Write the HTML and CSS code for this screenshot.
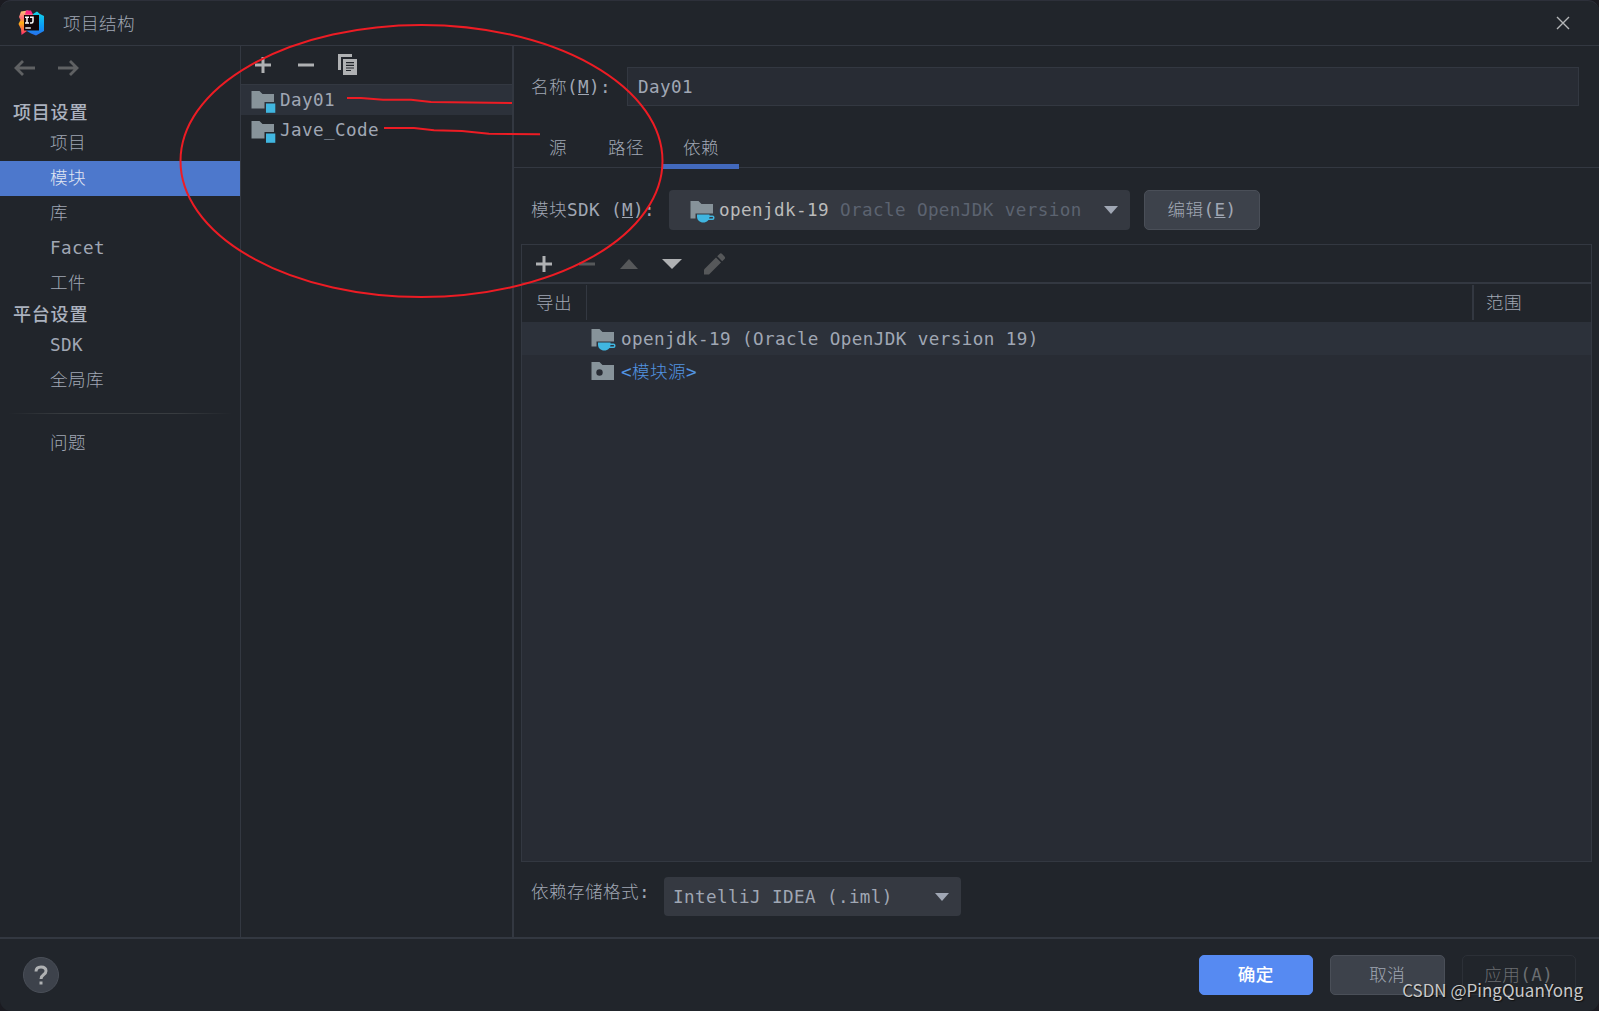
FILE: index.html
```html
<!DOCTYPE html>
<html lang="zh-CN">
<head>
    <meta charset="UTF-8">
    <meta name="viewport" content="width=device-width, initial-scale=1.0">
    <title>项目结构</title>
    <link rel="stylesheet" href="styles.css">
</head>
<body>
    <!-- shared icons -->
    <svg class="defs" width="0" height="0">
        <symbol id="plus" viewBox="0 0 18 18"><path d="M7.500 1h3v6.500H17v3h-6.500V17h-3v-6.500H1v-3h6.500z"/></symbol>
        <symbol id="minus" viewBox="0 0 18 18"><path d="M1 7.500h16v3H1z"/></symbol>
        <symbol id="folder" viewBox="0 0 26 24"><path fill="#87939a" d="M1.500 1h8l3 3H24v15H1.500z"/></symbol>
        <symbol id="module" viewBox="0 0 26 24">
            <path fill="#87939a" d="M1.500 1h8l3 3H24v8h-9.500v6.500h-13z"/>
            <path fill="#40b6e0" d="M16 13.500h9.300v9.300H16z"/>
        </symbol>
        <symbol id="sdk" viewBox="0 0 26 24">
            <path fill="#87939a" d="M1.500 1h8l3 3H24v9.500H6.500v5h-5z"/>
            <path fill="#40b6e0" d="M8 14.500h12.500v2c0 3.500-2.500 6-6.200 6S8 20 8 16.500z"/>
            <path fill="none" stroke="#40b6e0" stroke-width="1.500" d="M20 16.200h3.500q1.300 0 1.300 1.500t-1.300 1.600H19"/>
        </symbol>
        <symbol id="caret" viewBox="0 0 14 8"><path d="M0 0h14L7 8z"/></symbol>
    </svg>

    <div class="window">
        <div class="titlebar">
            <svg class="logo" width="26" height="26" viewBox="0 0 26 26">
                <defs>
                    <linearGradient id="warm" x1="0" y1="0" x2="0" y2="1">
                        <stop offset="0" stop-color="#fccf73"/>
                        <stop offset=".3" stop-color="#ff6c7c"/>
                        <stop offset=".5" stop-color="#fdb012"/>
                        <stop offset="1" stop-color="#fe2875"/>
                    </linearGradient>
                    <linearGradient id="cool" x1="0" y1="0" x2="0" y2="1">
                        <stop offset="0" stop-color="#14d3e8"/>
                        <stop offset=".6" stop-color="#0a9cf5"/>
                        <stop offset="1" stop-color="#2a70ec"/>
                    </linearGradient>
                </defs>
                <path fill="url(#warm)" d="M3 1.500L10 .5l5 4L9 21l-5.500 4-.5-6-2.500-5 2-4L1 7z"/>
                <path fill="#fe2885" d="M8 .5h5l2 4H7z"/>
                <path fill="url(#cool)" d="M15 4l4-2.500 3 2.500 4 2v15l-8 4.500-5-2-5-3 7-9z"/>
                <path fill="#120509" d="M6 5h15v15.500H6z"/>
                <path fill="#fff" d="M7.300 17.300h5.500v1.400H7.300z"/>
                <path fill="none" stroke="#fff" stroke-width="1.500" d="M7 7.300h4M9 7.300v6M7 13h4M12 7.300h3v4q0 1.800-1.600 1.800H12"/>
            </svg>
            <span class="title">项目结构</span>
            <svg class="close" width="14" height="14" viewBox="0 0 14 14"><path d="M1 1l12 12M13 1L1 13"/></svg>
        </div>

        <div class="main">
            <div class="sidebar">
                <div class="history">
                    <svg width="22" height="16" viewBox="0 0 22 16"><path d="M21 8H3M9 1L2 8l7 7"/></svg>
                    <svg width="22" height="16" viewBox="0 0 22 16"><path d="M1 8h18M13 1l7 7-7 7"/></svg>
                </div>
                <h2>项目设置</h2>
                <ul>
                    <li>项目</li>
                    <li class="selected">模块</li>
                    <li>库</li>
                    <li>Facet</li>
                    <li>工件</li>
                </ul>
                <h2 class="platform">平台设置</h2>
                <ul>
                    <li>SDK</li>
                    <li>全局库</li>
                </ul>
                <hr>
                <ul>
                    <li>问题</li>
                </ul>
            </div>

            <div class="modules">
                <div class="toolbar">
                    <svg class="icon" width="18" height="18"><use href="#plus"/></svg>
                    <svg class="icon" width="18" height="18"><use href="#minus"/></svg>
                    <svg class="icon" width="20" height="22" viewBox="0 0 20 22">
                        <path d="M0 0h14v3H3v13H0z"/>
                        <path fill-rule="evenodd" d="M5 5h14v16H5zM8 8v1.200h8V8zM8 10.700v1.200h8v-1.200zM8 13.400v1.200h8v-1.200zM8 16v1h5v-1z"/>
                    </svg>
                </div>
                <div class="module selected">
                    <svg width="26" height="24"><use href="#module"/></svg><span>Day01</span>
                </div>
                <div class="module">
                    <svg width="26" height="24"><use href="#module"/></svg><span>Jave_Code</span>
                </div>
            </div>

            <div class="details">
                <div class="name-row">
                    <label>名称(<u>M</u>):</label>
                    <div class="input">Day01</div>
                </div>

                <div class="tabs">
                    <div class="tab">源</div>
                    <div class="tab">路径</div>
                    <div class="tab active">依赖</div>
                </div>

                <div class="sdk-row">
                    <label>模块SDK (<u>M</u>):</label>
                    <div class="combo sdk-combo">
                        <svg width="26" height="24"><use href="#sdk"/></svg>
                        <span class="sdk-name">openjdk-19</span>
                        <span class="hint">Oracle OpenJDK version</span>
                        <svg class="caret" width="14" height="8"><use href="#caret"/></svg>
                    </div>
                    <div class="btn edit">编辑(<u>E</u>)</div>
                </div>

                <div class="table">
                    <div class="toolbar">
                        <svg class="icon" width="18" height="18"><use href="#plus"/></svg>
                        <svg class="icon off" width="18" height="18"><use href="#minus"/></svg>
                        <svg class="icon off" width="18" height="10" viewBox="0 0 18 10"><path d="M9 0l9 10H0z"/></svg>
                        <svg class="icon" width="20" height="10" viewBox="0 0 20 10"><path d="M0 0h20l-10 10z"/></svg>
                        <svg class="icon off" width="22" height="22" viewBox="0 0 22 22">
                            <path d="M0 16.500L12 4.500l5 5-12 12H0z"/>
                            <path d="M13.200 3.300l2.300-2.300q1.300-1.300 2.600 0l2.400 2.400q1.300 1.300 0 2.600l-2.300 2.300z"/>
                        </svg>
                    </div>
                    <div class="thead">
                        <div class="export">导出</div>
                        <div class="entry"></div>
                        <div class="scope">范围</div>
                    </div>
                    <div class="row selected">
                        <svg width="26" height="24"><use href="#sdk"/></svg><span>openjdk-19 (Oracle OpenJDK version 19)</span>
                    </div>
                    <div class="row">
                        <svg width="26" height="24"><use href="#folder"/><circle cx="9.500" cy="11.500" r="3.200" fill="#282c34"/></svg><span class="link">&lt;模块源&gt;</span>
                    </div>
                </div>

                <div class="format-row">
                    <label>依赖存储格式:</label>
                    <div class="combo format-combo">
                        <span>IntelliJ IDEA (.iml)</span>
                        <svg class="caret" width="14" height="8"><use href="#caret"/></svg>
                    </div>
                </div>
            </div>
        </div>

        <div class="footer">
            <div class="help"><svg width="14" height="20" viewBox="0 0 14 20"><path fill="none" stroke="#afb1b3" stroke-width="3" d="M2 6.500Q2 2 7 2t5 4q0 2-2.500 3.800T7 14"/><path fill="#afb1b3" d="M5.500 16.500h3v3h-3z"/></svg></div>
            <div class="btn primary">确定</div>
            <div class="btn">取消</div>
            <div class="btn disabled">应用(A)</div>
        </div>

        <!-- red pen marks -->
        <svg class="marks" width="700" height="320" viewBox="0 0 700 320">
            <ellipse cx="421.500" cy="161" rx="241" ry="136"/>
            <path d="M347 98h14l22 1.800h28l20 2.200 81 1"/>
            <path d="M384 128h30l20 2.200 28 .8 27 2.800 51 .4"/>
        </svg>
        <div class="watermark">CSDN @PingQuanYong</div>
    </div>
</body>
</html>
```
FILE: styles.css
```css
* {
    box-sizing: border-box;
}

body {
    margin: 0;
    background: #1b1b21;
    color: #a0a7b4;
    font-family: 'DejaVu Sans Mono', 'Noto Sans CJK SC', monospace;
    font-size: 17.6px;
    font-weight: 300;
    letter-spacing: 0.4px;
    line-height: 24px;
    white-space: nowrap;
    overflow: hidden;
}

.defs {
    position: absolute;
}

svg {
    display: block;
    flex: none;
}

.window {
    position: relative;
    display: flex;
    flex-direction: column;
    height: 1011px;
    background: #21252b;
    border-top: 1px solid #2d303a;
    border-radius: 11px;
}

/* Title bar */
.titlebar {
    display: flex;
    align-items: center;
    height: 45px;
    padding: 0 29px 0 18px;
    border-bottom: 1px solid #333841;
}

.title {
    margin-left: 19px;
    padding-top: 1px;
}

.close {
    margin-left: auto;
    fill: none;
    stroke: #b4b6b8;
    stroke-width: 1.4;
}

.main {
    display: flex;
    height: 891px;
}

/* Left navigation */
.sidebar {
    width: 241px;
    border-right: 1px solid #333841;
}

.history {
    display: flex;
    gap: 21px;
    height: 52px;
    padding: 14px 0 0 14px;
}

.history svg {
    fill: none;
    stroke: #5f6163;
    stroke-width: 2.8;
}

.sidebar h2 {
    height: 28px;
    margin: 0;
    padding: 3px 0 0 13px;
    color: #abb2bf;
    font-size: 18px;
    font-weight: 500;
    letter-spacing: 0.8px;
}

.sidebar h2.platform {
    height: 27px;
    padding-top: 2px;
}

.sidebar ul {
    margin: 0;
    padding: 0;
    list-style: none;
}

.sidebar li {
    height: 35px;
    padding: 5px 0 0 50px;
}

.sidebar li.selected {
    background: #4d78cc;
    color: #e0e6f2;
}

.sidebar hr {
    height: 1px;
    margin: 15px 8px 12px 8px;
    border: 0;
    background: linear-gradient(to right, transparent, #383c40 25%, #383c40 75%, transparent);
}

/* Module list */
.modules {
    width: 271px;
}

.toolbar {
    display: flex;
    align-items: center;
}

.icon {
    fill: #afb1b3;
}

.icon.off {
    fill: #56585a;
}

.modules .toolbar {
    gap: 25px;
    height: 38px;
    padding-left: 13px;
}

.modules .toolbar .icon:last-child {
    margin-left: -2px;
}

.module {
    display: flex;
    align-items: center;
    height: 30px;
    padding-left: 9px;
}

.module span {
    margin-left: 4px;
}

.module.selected {
    height: 31px;
    background: #2c313a;
    border-top: 1px solid #333841;
}

.module svg {
    margin-top: 3px;
}

/* Module details */
.details {
    flex: 1;
    border-left: 2px solid #333841;
}

.name-row {
    display: flex;
    align-items: center;
    height: 39px;
    margin: 21px 20px 0 17px;
}

.name-row label {
    width: 96px;
}

.input {
    flex: 1;
    height: 39px;
    padding: 7px 10px;
    background: #282c34;
    border: 1px solid #333841;
}

.tabs {
    display: flex;
    height: 62px;
    padding: 23px 0 0 15px;
    border-bottom: 1px solid #333841;
    margin-bottom: 22px;
}

.tab {
    height: 39px;
    padding: 7px 19px 0 20px;
}

.tab:first-child {
    padding-right: 21px;
}

.tab.active {
    position: relative;
    width: 76px;
}

.tab.active::after {
    content: "";
    position: absolute;
    left: 0;
    right: 0;
    bottom: -1px;
    height: 5px;
    background: #4269bd;
}

.sdk-row {
    display: flex;
    align-items: center;
    padding-left: 17px;
}

.sdk-row label {
    width: 138px;
}

.combo {
    display: flex;
    align-items: center;
    height: 39px;
    background: #353941;
    border-radius: 4px;
}

.sdk-combo {
    width: 461px;
    height: 40px;
    padding: 0 12px 0 20px;
}

.sdk-combo svg:first-child {
    margin-top: 4px;
}

.sdk-name {
    margin-left: 4px;
    color: #bbb;
}

.hint {
    margin-left: 11px;
    color: #5c6370;
}

.caret {
    margin-left: auto;
    fill: #a0a7b4;
}

.btn {
    display: flex;
    justify-content: center;
    align-items: center;
    width: 115px;
    height: 40px;
    background: #3d424b;
    border: 1px solid #4a4f58;
    border-radius: 5px;
}

.edit {
    width: 116px;
    margin-left: 14px;
}

/* Dependencies table */
.table {
    width: 1071px;
    height: 618px;
    margin: 14px 0 0 7px;
    background: #282c34;
    border: 1px solid #333841;
}

.table .toolbar {
    gap: 25px;
    height: 39px;
    padding-left: 13px;
    background: #21252b;
    border-bottom: 2px solid #333841;
}

.table .toolbar .icon:nth-child(3) {
    margin-left: -1px;
}

.table .toolbar .icon:nth-child(4) {
    margin: 0 -3px 0 -1px;
}

.thead {
    display: flex;
    height: 38px;
    padding: 1px 0 2px;
    background: #21252b;
}

.thead div {
    padding-top: 6px;
}

.thead .export {
    width: 65px;
    padding-left: 14px;
    border-right: 1px solid #333841;
}

.thead .entry {
    flex: 1;
}

.thead .scope {
    width: 119px;
    padding-left: 12px;
    border-left: 2px solid #333841;
}

.row {
    display: flex;
    align-items: center;
    height: 33px;
    padding-left: 68px;
}

.row.selected {
    background: #2c313a;
}

.row svg {
    margin-top: 3px;
}

.row span {
    margin-left: 5px;
}

.link {
    color: #5294e2;
}

.format-row {
    display: flex;
    padding: 15px 0 0 17px;
}

.format-row label {
    width: 133px;
    padding-top: 3px;
}

.format-combo {
    width: 297px;
    padding: 0 12px 0 9px;
}

/* Bottom bar */
.footer {
    display: flex;
    align-items: flex-start;
    gap: 17px;
    height: 74px;
    padding: 16px 23px 0 23px;
    border-top: 2px solid #333841;
}

.footer .btn {
    width: 114.500px;
}

.help {
    display: flex;
    justify-content: center;
    align-items: center;
    width: 36px;
    height: 36px;
    margin: 2px auto 0 0;
    background: #3d424b;
    border: 1px solid #4a4f58;
    border-radius: 50%;
}

.btn.primary {
    background: #568af2;
    border-color: #568af2;
    color: #fff;
    font-weight: 500;
}

.btn.disabled {
    background: none;
    border-color: #2c3037;
    color: #6b6e72;
}

/* Overlays */
.marks {
    position: absolute;
    left: 0;
    top: -1px;
    fill: none;
    stroke: #ed1c24;
    stroke-width: 2;
    pointer-events: none;
}

.watermark {
    position: absolute;
    right: 16px;
    bottom: 9px;
    color: #c8c9ca;
    font-family: 'Noto Sans CJK SC', sans-serif;
    font-size: 17px;
    font-weight: 400;
    letter-spacing: 0;
    text-shadow: 1px 1px 1px #111;
}
```
